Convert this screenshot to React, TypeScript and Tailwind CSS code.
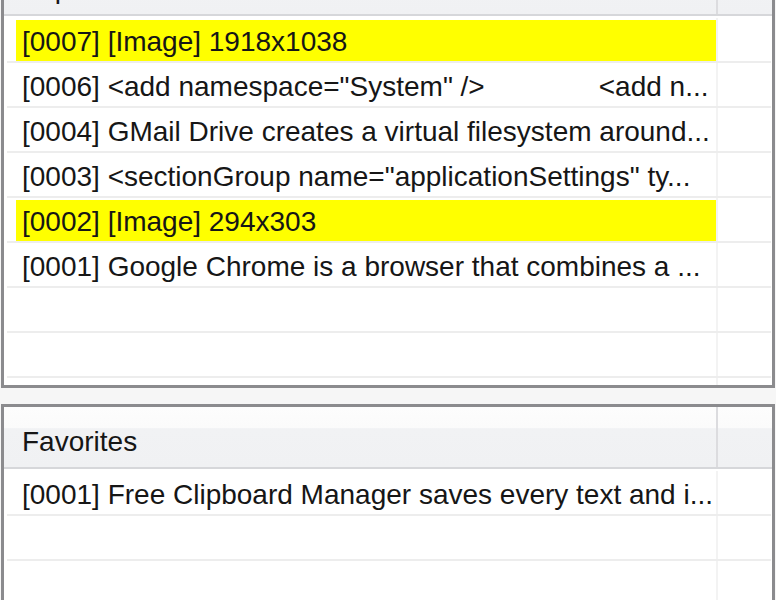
import React from "react";

type Row = { text: React.ReactNode; hl?: boolean };

const font = { fontFamily: '"Liberation Sans", Arial, sans-serif' };

function ListRow({ row }: { row: Row }) {
  return (
    <div className="ml-[3px] mr-px flex h-[45px] border-b-2 border-[#ededed]">
      <div className="w-[709px] pl-[9px] pt-[2px]">
        <div
          className={
            "h-full overflow-hidden whitespace-nowrap pl-[6px] text-[28px] leading-[43px] text-[#161616] " +
            (row.hl ? "bg-[#ffff00]" : "")
          }
        >
          {row.text}
        </div>
      </div>
      <div className="w-[2px] bg-[#f3f3f3]" />
      <div className="flex-1" />
    </div>
  );
}

function Panel({
  title,
  rows,
  bodyHeight,
}: {
  title: string;
  rows: Row[];
  bodyHeight: number;
}) {
  return (
    <div className="border-[3px] border-[#8b8b8e] bg-white">
      <div className="flex h-[60px] bg-[linear-gradient(#fdfdfd_0%,#fbfbfb_35%,#f1f2f4_36%,#f0f1f3_100%)]">
        <div className="w-[712px] pl-[18px] text-[28px] leading-[70px] text-[#161616]">
          {title}
        </div>
        <div className="w-[2px] bg-[#dcdcdf]" />
        <div className="flex-1" />
      </div>
      <div className="h-[2px] bg-[#d6d7da]" />
      <div className="overflow-hidden pt-[2px]" style={{ height: bodyHeight }}>
        {rows.map((r, i) => (
          <ListRow key={i} row={r} />
        ))}
      </div>
    </div>
  );
}

export default function App() {
  const top: Row[] = [
    { text: "[0007] [Image] 1918x1038", hl: true },
    {
      text: (
        <>
          <span>[0006] &lt;add namespace="System" /&gt;</span>
          <span className="ml-[114px]">&lt;add n...</span>
        </>
      ),
    },
    { text: "[0004] GMail Drive creates a virtual filesystem around..." },
    { text: '[0003] <sectionGroup name="applicationSettings" ty...' },
    { text: "[0002] [Image] 294x303", hl: true },
    { text: "[0001] Google Chrome is a browser that combines a ..." },
    { text: "" },
    { text: "" },
    { text: "" },
  ];
  const fav: Row[] = [
    { text: "[0001] Free Clipboard Manager saves every text and i..." },
    { text: "" },
    { text: "" },
    { text: "" },
  ];
  return (
    <div
      className="h-[600px] w-[776px] overflow-hidden bg-[#f6f6f6] pl-px"
      style={font}
    >
      <div className="mr-px -mt-[49px]">
        <Panel title="Clipboard" rows={top} bodyHeight={369} />
      </div>
      <div className="mr-px mt-[16px]">
        <Panel title="Favorites" rows={fav} bodyHeight={300} />
      </div>
    </div>
  );
}
